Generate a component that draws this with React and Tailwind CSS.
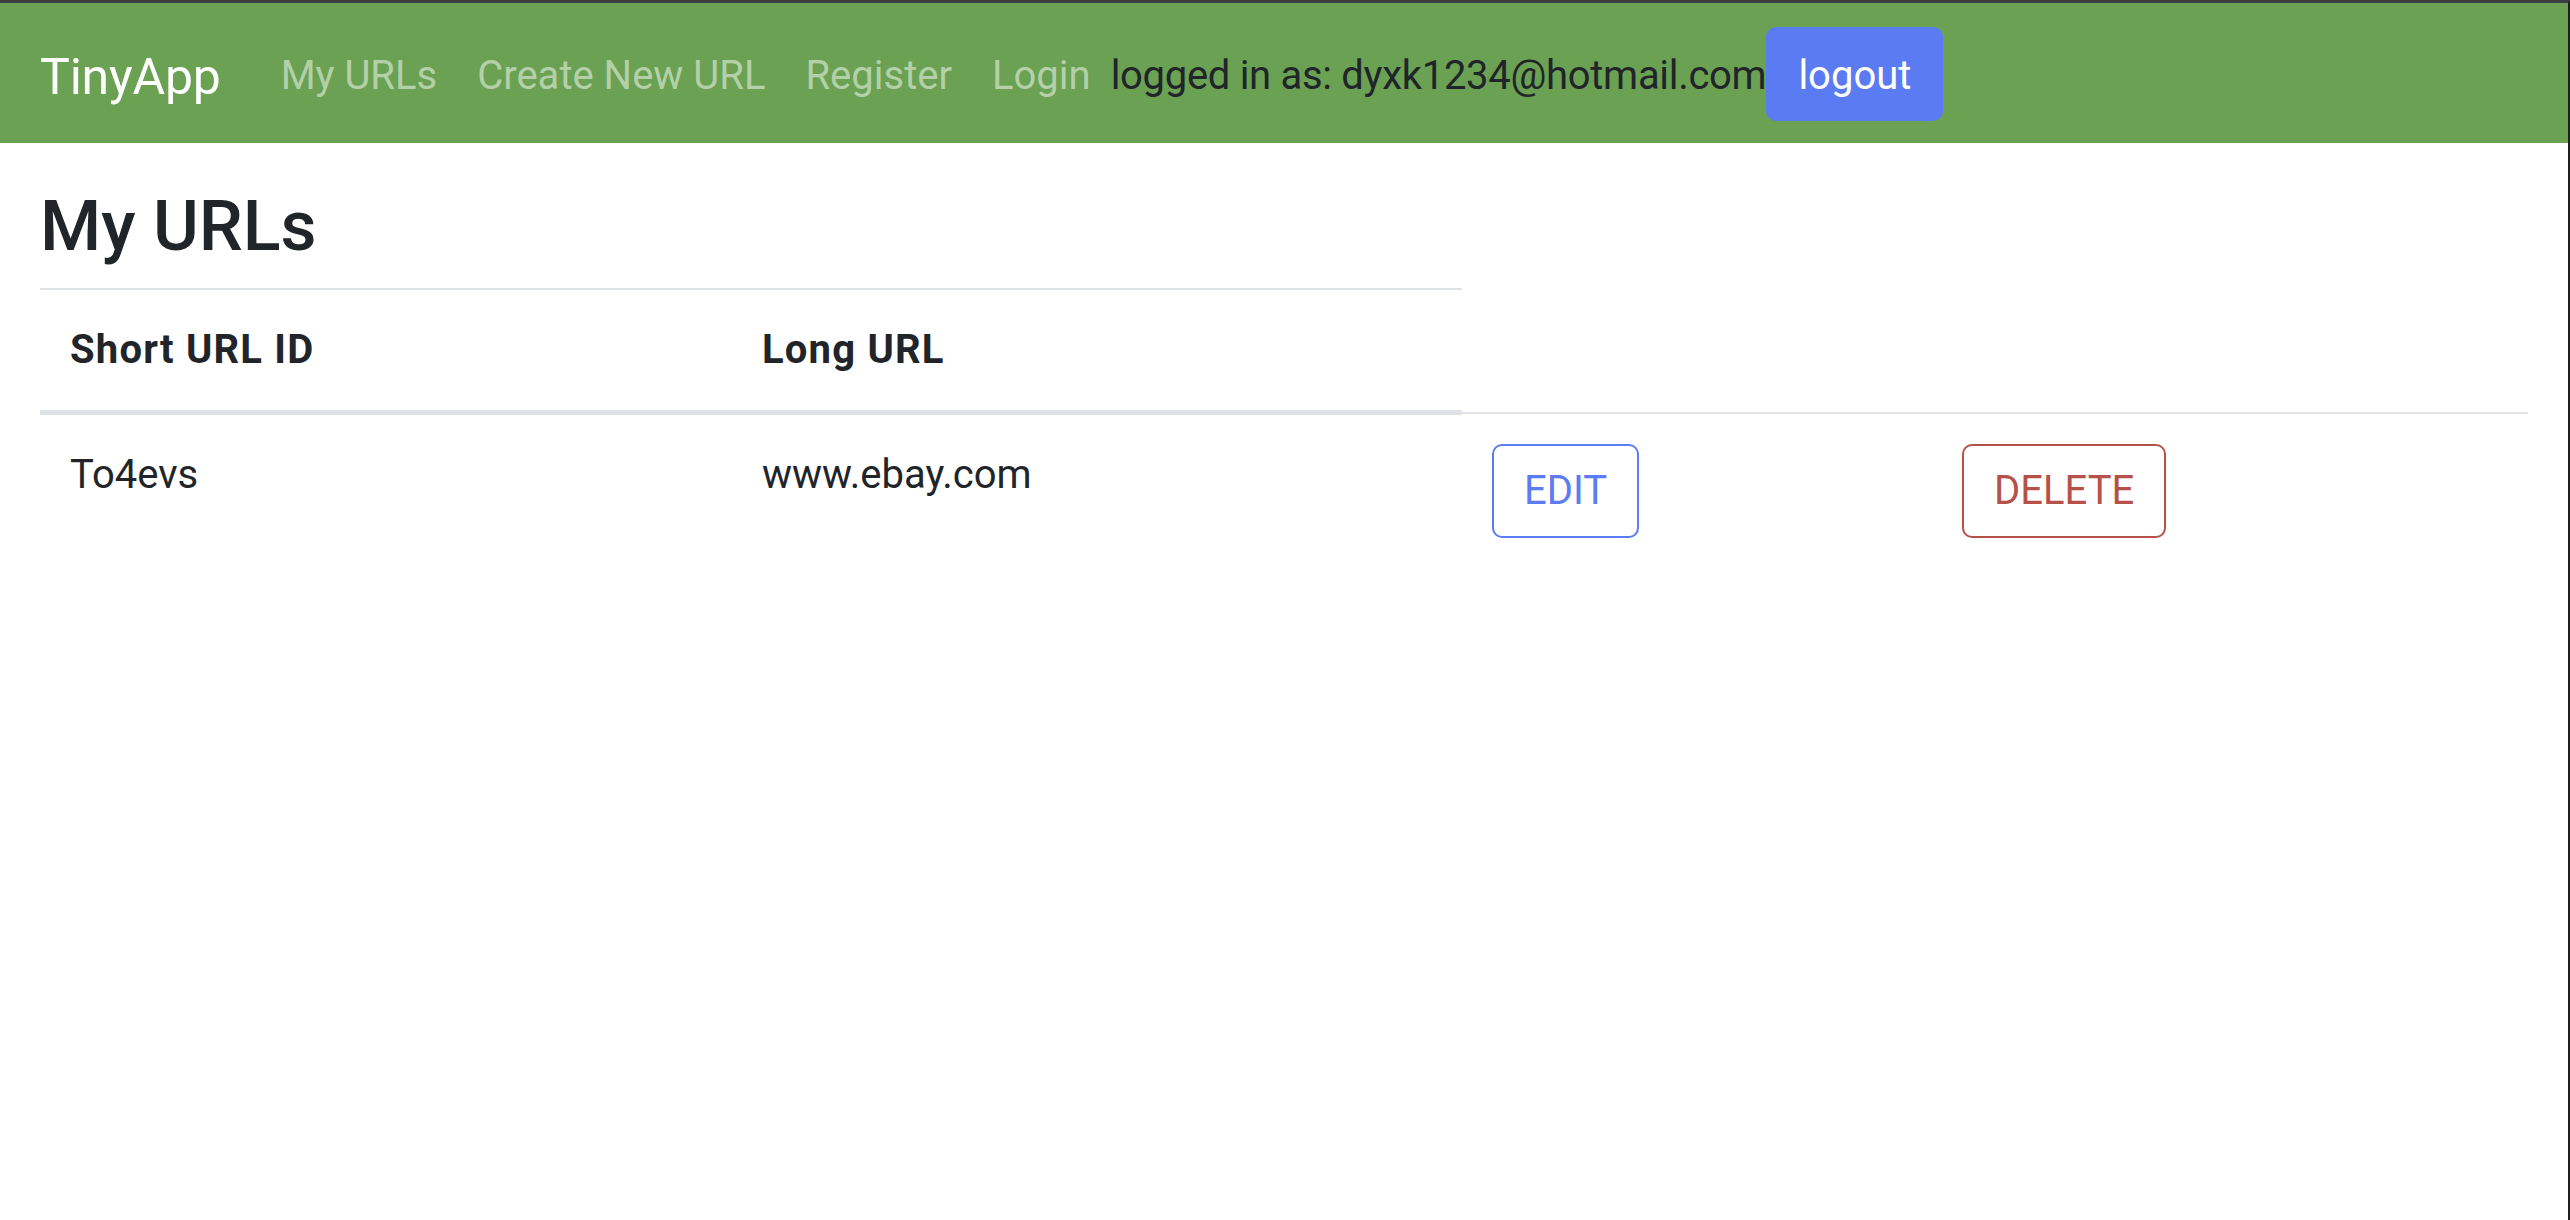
import React from "react";

// nav entries shown in the top bar
const navLinks = ["My URLs", "Create New URL", "Register", "Login"];

// rows of the url table
const urls = [{ id: "To4evs", longURL: "www.ebay.com" }];

export default function App() {
  return (
    <div className="min-h-screen h-[1220px] bg-white border-t-[3px] border-t-[#3b3c40] border-r-2 border-r-[#1e1e1e] font-[Roboto,'Noto_Sans',sans-serif] text-[#212529]">
      {/* ============ Navbar ============ */}
      <nav className="flex items-center h-[140px] bg-[#6aa152] px-10">
        <a className="text-[50px] leading-[75px] text-white mr-10 pt-[8px] tracking-[-0.2px]">TinyApp</a>
        {navLinks.map((label) => (
          <a key={label} className="px-5 mt-[6px] text-[40px] leading-[60px] text-white/50">
            {label}
          </a>
        ))}
        <span className="mt-[6px] text-[40px] leading-[60px] text-[#212529] tracking-[-0.3px]">
          logged in as: dyxk1234@hotmail.com
        </span>
        <button className="mt-[2px] bg-[#5b7bf2] border-2 border-[#5b7bf2] text-white text-[40px] leading-[60px] px-[30px] pt-[17px] pb-[13px] rounded-[10px]">
          logout
        </button>
      </nav>

      {/* ============ Content ============ */}
      <main className="px-10">
        <h3 className="text-[70px] leading-[84px] font-medium mt-[41px] mb-5">My URLs</h3>

        <table className="w-full table-fixed border-collapse text-[40px] leading-[60px]">
          <colgroup>
            <col className="w-[692px]" />
            <col className="w-[730px]" />
            <col className="w-[470px]" />
            <col className="w-[596px]" />
          </colgroup>
          <thead>
            <tr>
              <th className="text-left font-bold tracking-[0.03em] p-[30px] border-t-2 border-b-[5px] border-[#dee2e6]">
                Short URL ID
              </th>
              <th className="text-left font-bold tracking-[0.03em] p-[30px] border-t-2 border-b-[5px] border-[#dee2e6]">
                Long URL
              </th>
            </tr>
          </thead>
          <tbody>
            {urls.map((url) => (
              <tr key={url.id}>
                <td className="p-[30px] align-top border-t-2 border-[#dee2e6]">{url.id}</td>
                <td className="p-[30px] align-top border-t-2 border-[#dee2e6]">{url.longURL}</td>
                <td className="p-[30px] align-top border-t-2 border-[#dee2e6]">
                  <button className="border-2 border-[#5b7cf2] text-[#5b7cf2] px-[30px] py-[15px] rounded-[10px] leading-[60px]">
                    EDIT
                  </button>
                </td>
                <td className="p-[30px] align-top border-t-2 border-[#dee2e6]">
                  <button className="border-2 border-[#b6514a] text-[#b6514a] px-[30px] py-[15px] rounded-[10px] leading-[60px]">
                    DELETE
                  </button>
                </td>
              </tr>
            ))}
          </tbody>
        </table>
      </main>
    </div>
  );
}
